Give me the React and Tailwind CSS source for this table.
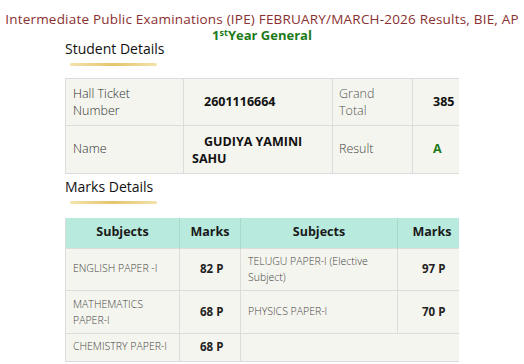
export default function App() {
  const font = { fontFamily: '"Open Sans", "Noto Sans", sans-serif' };
  return (
    <div className="w-[524px] h-[364px] overflow-hidden bg-white text-[#222]" style={font}>
      <div className="pt-[10px] flex flex-col items-center">
        <div className="text-[13.5px] leading-[18px] font-medium text-[#8a3030] whitespace-nowrap tracking-[0.2px]">
          Intermediate Public Examinations (IPE) FEBRUARY/MARCH-2026 Results, BIE, AP
        </div>
        <div className="text-[13px] font-bold text-[#1d7a1a] leading-[14px]">
          1<span className="text-[9px] leading-[9px] align-top">st</span>Year General
        </div>
      </div>
      <div className="pl-[65px] pr-[66px]">
        <div className="text-[14px] leading-[18px] text-[#111] -mt-[2px]">Student Details</div>
        <div className="ml-[5px] mt-[5px] w-[87px] h-[3px] rounded-full bg-gradient-to-r from-[#f3e3ad] via-[#e6c46a] to-[#f3e3ad]" />
        <table className="mt-[12px] w-[393px] border-collapse bg-[#f4f5ee] text-[12.5px] table-fixed">
          <colgroup>
            <col className="w-[118px]" />
            <col className="w-[149px]" />
            <col className="w-[80px]" />
            <col className="w-[46px]" />
          </colgroup>
          <tbody>
            <tr className="h-[47px]">
              <td className="border border-[#dcdcdc] px-[7px] leading-[17px] text-[#333] font-light">Hall Ticket<br />Number</td>
              <td className="border border-[#dcdcdc] px-[8px] font-bold text-[#111]"><span className="pl-[12px]">2601116664</span></td>
              <td className="border border-[#dcdcdc] px-[6px] leading-[17px] text-[#555] font-light">Grand<br />Total</td>
              <td className="border-y border-l border-[#dcdcdc] px-[6px] font-bold text-[#111]"><span className="pl-[14px]">385</span></td>
            </tr>
            <tr className="h-[48px]">
              <td className="border border-[#dcdcdc] px-[7px] text-[#333] font-light">Name</td>
              <td className="border border-[#dcdcdc] px-[8px] font-bold text-[#111] leading-[17px]"><span className="pl-[12px]">GUDIYA YAMINI</span> SAHU</td>
              <td className="border border-[#dcdcdc] px-[6px] text-[#444] font-light">Result</td>
              <td className="border-y border-l border-[#dcdcdc] px-[6px] font-bold text-[#1d7a1a]"><span className="pl-[14px]">A</span></td>
            </tr>
          </tbody>
        </table>
        <div className="mt-[4px] text-[14px] leading-[18px] text-[#111]">Marks Details</div>
        <div className="ml-[5px] mt-[5px] w-[87px] h-[3px] rounded-full bg-gradient-to-r from-[#f3e3ad] via-[#e6c46a] to-[#f3e3ad]" />
        <table className="mt-[14px] w-[393px] border-collapse bg-[#f4f5ee] text-[10.5px] table-fixed">
          <colgroup>
            <col className="w-[114px]" />
            <col className="w-[61px]" />
            <col className="w-[157px]" />
            <col className="w-[61px]" />
          </colgroup>
          <thead>
            <tr className="h-[30px] bg-[#b8ebdd] text-[12.5px] font-bold text-[#1a1a1a]">
              <th className="border-l border-[#dcdcdc] border-r border-r-[#a9d9cb]">Subjects</th>
              <th className="border-r border-[#a9d9cb]">Marks</th>
              <th className="border-r border-[#a9d9cb]">Subjects</th>
              <th className="text-right pr-[7px]">Marks</th>
            </tr>
          </thead>
          <tbody className="text-[#444] font-light">
            <tr className="h-[42px]">
              <td className="border border-[#dcdcdc] px-[7px]">ENGLISH PAPER -I</td>
              <td className="border border-[#dcdcdc] px-[6px] font-bold text-[#222] text-[11.5px]"><span className="pl-[14px]">82 P</span></td>
              <td className="border border-[#dcdcdc] px-[7px] leading-[16px]">TELUGU PAPER-I (Elective Subject)</td>
              <td className="border-y border-l border-[#dcdcdc] px-[6px] font-bold text-[#222] text-[11.5px]"><span className="pl-[18px]">97 P</span></td>
            </tr>
            <tr className="h-[43px]">
              <td className="border border-[#dcdcdc] px-[7px] leading-[16px]">MATHEMATICS<br />PAPER-I</td>
              <td className="border border-[#dcdcdc] px-[6px] font-bold text-[#222] text-[11.5px]"><span className="pl-[14px]">68 P</span></td>
              <td className="border border-[#dcdcdc] px-[7px]">PHYSICS PAPER-I</td>
              <td className="border-y border-l border-[#dcdcdc] px-[6px] font-bold text-[#222] text-[11.5px]"><span className="pl-[18px]">70 P</span></td>
            </tr>
            <tr className="h-[28px]">
              <td className="border border-[#dcdcdc] px-[7px] whitespace-nowrap">CHEMISTRY PAPER-I</td>
              <td className="border border-[#dcdcdc] px-[6px] font-bold text-[#222] text-[11.5px]"><span className="pl-[14px]">68 P</span></td>
              <td colSpan={2} className="border-y border-l border-[#dcdcdc]"></td>
            </tr>
          </tbody>
        </table>
      </div>
    </div>
  );
}
